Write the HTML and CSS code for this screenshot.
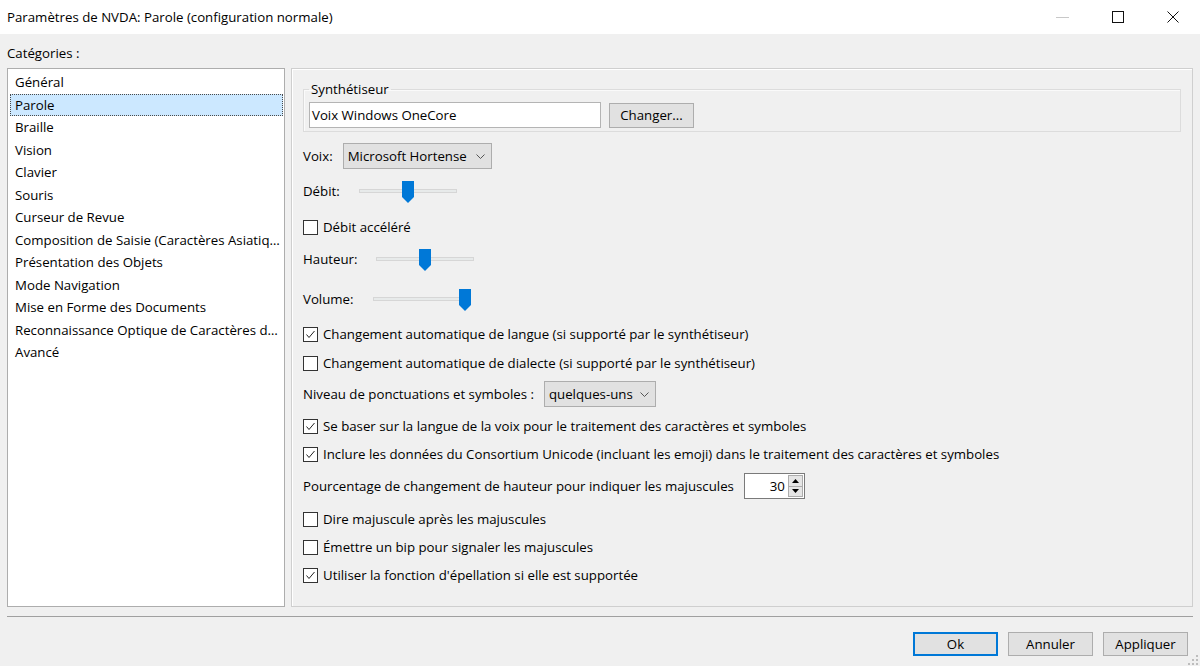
FILE: index.html
```html
<!DOCTYPE html>
<html lang="fr">
<head>
<meta charset="utf-8">
<title>Paramètres de NVDA: Parole (configuration normale)</title>
<link rel="stylesheet" href="styles.css">
</head>
<body>
<div class="window">
  <header class="titlebar">
    <span class="title">Paramètres de NVDA: Parole (configuration normale)</span>
    <div class="win-controls">
      <span class="win-btn"><svg width="13" height="12" viewBox="0 0 13 12"><line x1="0" y1="6.5" x2="13" y2="6.5" stroke="#c8c8c8" stroke-width="1"/></svg></span>
      <span class="win-btn"><svg width="12" height="12" viewBox="0 0 12 12"><rect x="0.5" y="0.5" width="11" height="11" fill="none" stroke="#111" stroke-width="1"/></svg></span>
      <span class="win-btn"><svg width="12" height="12" viewBox="0 0 12 12"><path d="M0.5 0.5 L11.5 11.5 M11.5 0.5 L0.5 11.5" stroke="#111" stroke-width="1" fill="none"/></svg></span>
    </div>
  </header>

  <div class="client">
    <div class="cat-label">Catégories :</div>
    <div class="panes">
      <ul class="catlist">
        <li>Général</li>
        <li class="selected">Parole</li>
        <li>Braille</li>
        <li>Vision</li>
        <li>Clavier</li>
        <li>Souris</li>
        <li>Curseur de Revue</li>
        <li>Composition de Saisie (Caractères Asiatiques)</li>
        <li>Présentation des Objets</li>
        <li>Mode Navigation</li>
        <li>Mise en Forme des Documents</li>
        <li>Reconnaissance Optique de Caractères de Windows</li>
        <li>Avancé</li>
      </ul>

      <section class="settings">
        <fieldset class="group">
          <legend>Synthétiseur</legend>
          <div class="synth-row">
            <div class="textfield">Voix Windows OneCore</div>
            <button class="btn">Changer...</button>
          </div>
        </fieldset>

        <div class="row row-combo mt-11">
          <span class="label">Voix:</span>
          <div class="combo combo-voice"><span>Microsoft Hortense</span><svg class="chev" width="9" height="5" viewBox="0 0 9 5"><path d="M0.5 0.5 L4.5 4.5 L8.5 0.5" fill="none" stroke="#555" stroke-width="1"/></svg></div>
        </div>

        <div class="row row-slider mt-10">
          <span class="label">Débit:</span>
          <div class="slider s-debit"><div class="track"></div><svg class="thumb" style="left:calc(50% - 6px)" width="12" height="22" viewBox="0 0 12 22"><polygon points="0,0 12,0 12,16 6,22 0,16" fill="#0078d7"/></svg></div>
        </div>

        <label class="row row-check mt-14"><span class="box"></span>Débit accéléré</label>

        <div class="row row-slider mt-10">
          <span class="label">Hauteur:</span>
          <div class="slider"><div class="track"></div><svg class="thumb" style="left:calc(50% - 6px)" width="12" height="22" viewBox="0 0 12 22"><polygon points="0,0 12,0 12,16 6,22 0,16" fill="#0078d7"/></svg></div>
        </div>

        <div class="row row-slider mt-16">
          <span class="label">Volume:</span>
          <div class="slider"><div class="track"></div><svg class="thumb" style="left:calc(94% - 6px)" width="12" height="22" viewBox="0 0 12 22"><polygon points="0,0 12,0 12,16 6,22 0,16" fill="#0078d7"/></svg></div>
        </div>

        <label class="row row-check mt-13"><span class="box checked"><svg width="13" height="13" viewBox="0 0 13 13"><path d="M2.5 6.5 L5 9.5 L10.5 3" fill="none" stroke="#222" stroke-width="1"/></svg></span>Changement automatique de langue (si supporté par le synthétiseur)</label>
        <label class="row row-check mt-9"><span class="box"></span>Changement automatique de dialecte (si supporté par le synthétiseur)</label>

        <div class="row row-combo mt-8">
          <span class="label">Niveau de ponctuations et symboles :</span>
          <div class="combo combo-punct"><span>quelques-uns</span><svg class="chev" width="9" height="5" viewBox="0 0 9 5"><path d="M0.5 0.5 L4.5 4.5 L8.5 0.5" fill="none" stroke="#555" stroke-width="1"/></svg></div>
        </div>

        <label class="row row-check mt-9"><span class="box checked"><svg width="13" height="13" viewBox="0 0 13 13"><path d="M2.5 6.5 L5 9.5 L10.5 3" fill="none" stroke="#222" stroke-width="1"/></svg></span>Se baser sur la langue de la voix pour le traitement des caractères et symboles</label>
        <label class="row row-check mt-8"><span class="box checked"><svg width="13" height="13" viewBox="0 0 13 13"><path d="M2.5 6.5 L5 9.5 L10.5 3" fill="none" stroke="#222" stroke-width="1"/></svg></span>Inclure les données du Consortium Unicode (incluant les emoji) dans le traitement des caractères et symboles</label>

        <div class="row row-combo mt-9">
          <span class="label">Pourcentage de changement de hauteur pour indiquer les majuscules</span>
          <div class="spin">
            <span class="spin-value">30</span>
            <div class="spin-btns">
              <span class="spin-btn"><svg width="7" height="4" viewBox="0 0 7 4"><polygon points="0,4 3.5,0 7,4" fill="#000"/></svg></span>
              <span class="spin-btn"><svg width="7" height="4" viewBox="0 0 7 4"><polygon points="0,0 7,0 3.5,4" fill="#000"/></svg></span>
            </div>
          </div>
        </div>

        <label class="row row-check mt-10"><span class="box"></span>Dire majuscule après les majuscules</label>
        <label class="row row-check mt-8"><span class="box"></span>Émettre un bip pour signaler les majuscules</label>
        <label class="row row-check mt-8"><span class="box checked"><svg width="13" height="13" viewBox="0 0 13 13"><path d="M2.5 6.5 L5 9.5 L10.5 3" fill="none" stroke="#222" stroke-width="1"/></svg></span>Utiliser la fonction d'épellation si elle est supportée</label>
      </section>
    </div>

    <div class="separator"></div>

    <footer class="buttons">
      <button class="btn btn-default">Ok</button>
      <button class="btn">Annuler</button>
      <button class="btn">Appliquer</button>
    </footer>
  </div>

  <svg class="grip" width="10" height="10" viewBox="0 0 10 10">
    <rect x="8" y="0" width="2" height="2" fill="#bdbdbd"/>
    <rect x="4" y="4" width="2" height="2" fill="#bdbdbd"/>
    <rect x="8" y="4" width="2" height="2" fill="#bdbdbd"/>
    <rect x="0" y="8" width="2" height="2" fill="#bdbdbd"/>
    <rect x="4" y="8" width="2" height="2" fill="#bdbdbd"/>
    <rect x="8" y="8" width="2" height="2" fill="#bdbdbd"/>
  </svg>
</div>
</body>
</html>
```

FILE: styles.css
```css
* { box-sizing: border-box; }

html, body {
  margin: 0;
  padding: 0;
}

body {
  width: 1200px;
  height: 666px;
  overflow: hidden;
  background: #f0f0f0;
  font-family: "Open Sans", "Noto Sans", "DejaVu Sans", sans-serif;
  font-size: 13.25px;
  color: #000;
}

.window {
  position: relative;
  width: 1200px;
  height: 666px;
}

/* Title bar */
.titlebar {
  height: 34px;
  background: #fff;
  display: flex;
  align-items: center;
}

.title {
  flex: 1;
  padding-left: 7px;
  line-height: 18px;
}

.win-controls {
  display: flex;
  height: 34px;
}

.win-btn {
  width: 55px;
  height: 34px;
  display: flex;
  align-items: center;
  justify-content: center;
}

/* Client area */
.client {
  padding: 0 7px;
}

.cat-label {
  margin-top: 10px;
  height: 18px;
  line-height: 18px;
}

.panes {
  display: flex;
  gap: 6px;
  height: 539px;
  margin-top: 6px;
}

/* Category list */
.catlist {
  width: 278px;
  flex: none;
  margin: 0;
  padding: 2px 1px 0 2px;
  list-style: none;
  background: #fff;
  border: 1px solid #adadad;
}

.catlist li {
  height: 22.5px;
  line-height: 20.5px;
  padding-left: 4px;
  border: 1px solid transparent;
  white-space: nowrap;
  overflow: hidden;
  text-overflow: ellipsis;
}

.catlist li.selected {
  background: #cce8ff;
  border: 1px dotted #4a4a4a;
}

/* Settings panel */
.settings {
  flex: 1;
  display: flex;
  flex-direction: column;
  padding: 11px 11px;
  border: 1px solid #cfcfcf;
  box-shadow: inset 1px 1px 0 #fff;
}

.group {
  margin: 0;
  padding: 4px 6px 3px 5px;
  border: 1px solid #dcdcdc;
  box-shadow: inset 1px 1px 0 #fafafa;
}

.group legend {
  padding: 0 2px;
  line-height: 18px;
}

.synth-row {
  display: flex;
  align-items: center;
  gap: 8px;
}

.textfield {
  width: 292px;
  height: 26px;
  line-height: 24px;
  padding-left: 2px;
  background: #fff;
  border: 1px solid #b4b4b4;
}

.btn {
  width: 85px;
  height: 25px;
  padding: 0;
  font: inherit;
  color: #000;
  background: #e1e1e1;
  border: 1px solid #adadad;
}

.btn-default {
  border: 2px solid #0078d7;
}

/* Rows */
.row {
  display: flex;
  align-items: center;
  white-space: nowrap;
}

.row-combo { height: 26px; }
.row-slider { height: 24px; }
.row-check { height: 20px; }

.mt-8 { margin-top: 8px; }
.mt-9 { margin-top: 9px; }
.mt-10 { margin-top: 10px; }
.mt-11 { margin-top: 11px; }
.mt-13 { margin-top: 13px; }
.mt-14 { margin-top: 14px; }
.mt-16 { margin-top: 16px; }

.label {
  margin-right: 10px;
}

.combo {
  height: 26px;
  display: flex;
  align-items: center;
  justify-content: space-between;
  padding: 0 6px 0 4px;
  background: #e1e1e1;
  border: 1px solid #adadad;
}

.combo-voice { width: 149px; }
.combo-punct { width: 112px; }

.chev { flex: none; }

/* Slider */
.slider {
  position: relative;
  width: 98px;
  height: 24px;
  margin-left: 9px;
}

.track {
  margin-top: 10px;
  height: 4px;
  background: #e7eaea;
  border: 1px solid #d6d6d6;
}

.thumb {
  position: absolute;
  top: 2px;
}

/* Checkbox */
.box {
  width: 15px;
  height: 15px;
  flex: none;
  margin-right: 5px;
  background: #fff;
  border: 1px solid #333;
  display: flex;
  align-items: center;
  justify-content: center;
}

/* Spin control */
.spin {
  width: 61px;
  height: 26px;
  display: flex;
  align-items: center;
  background: #fff;
  border: 1px solid #7a7a7a;
  padding: 1px 1px 1px 0;
}

.spin-value {
  flex: 1;
  text-align: right;
  padding-right: 3px;
}

.spin-btns {
  display: flex;
  flex-direction: column;
  width: 15px;
  height: 22px;
}

.spin-btn {
  flex: 1;
  display: flex;
  align-items: center;
  justify-content: center;
  background: #e5e5e5;
  border: 1px solid #acacac;
}

.spin-btn + .spin-btn { border-top: none; }

/* Footer */
.separator {
  margin-top: 9px;
  border-top: 1px solid #a0a0a0;
}

.buttons {
  display: flex;
  justify-content: flex-end;
  gap: 10px;
  margin-top: 15px;
  padding-right: 5px;
}

.buttons .btn {
  height: 24px;
}

.grip {
  position: absolute;
  right: 2px;
  bottom: 1px;
}
```
